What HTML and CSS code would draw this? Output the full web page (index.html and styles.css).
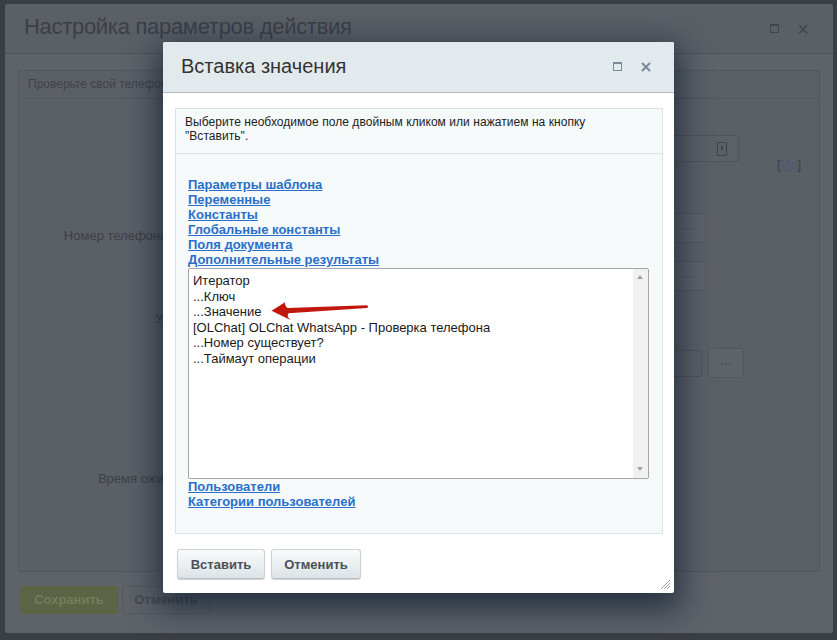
FILE: index.html
```html
<!DOCTYPE html>
<html lang="ru">
<head>
<meta charset="utf-8">
<title>Вставка значения</title>
<link rel="stylesheet" href="styles.css">
</head>
<body>
<div class="desk">
  <div class="bgwin">
    <div class="bgwin-head">
      <div class="bgwin-title">Настройка параметров действия</div>
      <div class="bgwin-icons">
        <span class="ico-max dim"></span>
        <span class="ico-close dim">×</span>
      </div>
    </div>
    <div class="bgwin-body">
      <div class="bgpanel">
        <div class="bgpanel-head">Проверьте свой телефон в OLChat WhatsApp</div>
        <div class="bgrow row-a">
          <div class="bglabel"></div>
          <div class="bginput w-a"><span class="doc-ico"></span></div>
          <div class="idlink">[<u>Ид</u>]</div>
        </div>
        <div class="bgrow row-b">
          <div class="bglabel lbl-pad lbl-phone">Номер телефона в международном формате:</div>
          <div class="bginput w-b"></div>
          <div class="bgbtn">...</div>
        </div>
        <div class="bgrow row-c">
          <div class="bglabel"></div>
          <div class="bginput w-b"></div>
          <div class="bgbtn">...</div>
        </div>
        <div class="bgrow row-u">
          <div class="bglabel">Учитывать ошибки проверки:</div>
        </div>
        <div class="bgrow row-d">
          <div class="bglabel"></div>
          <div class="bginput w-d"></div>
          <div class="bgbtn">...</div>
        </div>
        <div class="bgrow row-t">
          <div class="bglabel lbl-time">Время ожидания ответа (в секундах):</div>
        </div>
      </div>
      <div class="bgfoot">
        <div class="bgsave">Сохранить</div>
        <div class="bgcancel">Отменить</div>
      </div>
    </div>
  </div>

  <div class="modal">
    <div class="modal-head">
      <div class="modal-title">Вставка значения</div>
      <div class="modal-icons">
        <span class="ico-max"></span>
        <span class="ico-x">
          <svg width="10" height="10" viewBox="0 0 10 10"><path d="M1 1 L9 9 M9 1 L1 9" stroke="#7b8898" stroke-width="2" fill="none"/></svg>
        </span>
      </div>
    </div>
    <div class="modal-body">
      <div class="panel">
        <div class="info">Выберите необходимое поле двойным кликом или нажатием на кнопку "Вставить".</div>
        <div class="groups">
          <a class="grp">Параметры шаблона</a>
          <a class="grp">Переменные</a>
          <a class="grp">Константы</a>
          <a class="grp">Глобальные константы</a>
          <a class="grp">Поля документа</a>
          <a class="grp">Дополнительные результаты</a>
          <div class="listbox">
            <div class="items">
              <div>Итератор</div>
              <div>...Ключ</div>
              <div>...Значение</div>
              <div>[OLChat] OLChat WhatsApp - Проверка телефона</div>
              <div>...Номер существует?</div>
              <div>...Таймаут операции</div>
            </div>
            <div class="sbar">
              <span class="arr-up"></span>
              <span class="arr-down"></span>
            </div>
          </div>
          <a class="grp">Пользователи</a>
          <a class="grp">Категории пользователей</a>
        </div>
      </div>
    </div>
    <div class="modal-foot">
      <button class="btn b-insert">Вставить</button>
      <button class="btn b-cancel">Отменить</button>
    </div>
    <svg class="grip" width="12" height="12" viewBox="0 0 12 12">
      <path d="M11 2 L2 11 M11 5 L5 11 M11 8 L8 11" stroke="#9aa0a4" stroke-width="1" fill="none"/>
    </svg>
    <svg class="red-arrow" width="100" height="22" viewBox="0 0 100 22">
      <path d="M1.5 10.8 L15 2.2 Q14.5 5.5 17.5 8 L96.5 5.3 Q99.5 6.4 97 8 L18.5 13.2 Q16 16.5 21 20.2 Z" fill="#c0170e"/>
    </svg>
  </div>
</div>
</body>
</html>
```

FILE: styles.css
```css
* { box-sizing: border-box; }
html, body { margin: 0; padding: 0; }
body {
  width: 837px;
  height: 640px;
  overflow: hidden;
  background: #3a3e45;
  font-family: "Liberation Sans", Arial, sans-serif;
}
.desk { position: relative; width: 837px; height: 640px; }

/* background window (dimmed) */
.bgwin {
  position: absolute;
  left: 5px;
  top: 4px;
  width: 828px;
  height: 629px;
  background: #5e6269;
  border-radius: 3px;
  display: flex;
  flex-direction: column;
}
.bgwin-head {
  height: 50px;
  border-bottom: 1px solid #4e5258;
  display: flex;
  align-items: center;
  padding-left: 19px;
  background: #5b5f66;
  border-radius: 3px 3px 0 0;
}
.bgwin-title {
  font-size: 22px;
  color: #3b3f46;
  letter-spacing: -0.3px;
  padding-bottom: 4px;
}
.bgwin-icons {
  margin-left: auto;
  display: flex;
  align-items: center;
  gap: 18px;
  padding-right: 24px;
}
.dim.ico-max { border-color: #40444b; }
.ico-close.dim { color: #40444b; font-size: 20px; line-height: 16px; }
.bgwin-body { padding: 16px 13px 0; }
.bgpanel {
  height: 502px;
  border: 1px solid #53575e;
  background: #5b5f66;
  display: flex;
  flex-direction: column;
}
.bgpanel-head {
  height: 28px;
  flex: none;
  border-bottom: 1px solid #53575e;
  padding-left: 9px;
  font-size: 12px;
  line-height: 27px;
  color: #40444b;
}
.bgrow { display: flex; align-items: flex-start; flex: none; }
.bglabel {
  width: 322px;
  flex: none;
  text-align: right;
  padding-right: 10px;
  font-size: 13px;
  line-height: 16px;
  color: #3d4148;
  white-space: nowrap;
}
.lbl-pad { padding-top: 15px; }
.lbl-phone { padding-right: 0; }
.lbl-time { padding-right: 17px; }
.bginput {
  height: 27px;
  border: 1px solid #4f535a;
  border-radius: 3px;
  background: #5c6067;
  position: relative;
}
.row-a { margin-top: 36px; height: 27px; }
.row-b { margin-top: 51px; height: 30px; }
.row-c { margin-top: 18px; height: 30px; }
.row-u { margin-top: 20px; height: 16px; }
.row-d { margin-top: 21px; height: 30px; }
.row-t { margin-top: 93px; height: 16px; }
.w-a { width: 398px; }
.w-b { width: 322px; height: 30px; margin-right: 7px; }
.w-d { width: 361px; margin-top: 2px; margin-right: 6px; }
.doc-ico {
  position: absolute;
  right: 11px;
  top: 6px;
  width: 10px;
  height: 14px;
  border: 1px solid #3f434a;
  border-radius: 1px;
  background: linear-gradient(#3f434a, #3f434a) 3px 3px / 2px 4px no-repeat;
}
.idlink {
  margin-left: 38px;
  margin-top: 23px;
  font-size: 13px;
  line-height: 14px;
  color: #3d4148;
}
.idlink u { color: #4b5a70; }
.bgbtn {
  width: 36px;
  height: 30px;
  border: 1px solid #53575e;
  border-radius: 3px;
  background: #5f636a;
  color: #43474e;
  font-size: 12px;
  line-height: 24px;
  text-align: center;
}
.bgfoot {
  display: flex;
  gap: 4px;
  padding: 14px 0 0 2px;
}
.bgsave {
  width: 98px;
  height: 28px;
  border-radius: 3px;
  background: #5b6445;
  color: #737c5d;
  font-weight: bold;
  font-size: 13px;
  line-height: 28px;
  text-align: center;
}
.bgcancel {
  width: 88px;
  height: 28px;
  border-radius: 3px;
  background: #5e6269;
  border: 1px solid #565a61;
  color: #464a51;
  font-weight: bold;
  font-size: 13px;
  line-height: 26px;
  text-align: center;
}

/* modal */
.modal {
  position: absolute;
  left: 163px;
  top: 42px;
  width: 511px;
  height: 551px;
  background: #fff;
  border-radius: 2px;
  box-shadow: 0 10px 30px 6px rgba(14, 30, 46, 0.7);
  display: flex;
  flex-direction: column;
}
.modal-head {
  height: 51px;
  flex: none;
  background: #e3eaed;
  border-bottom: 1px solid #b5bcc0;
  display: flex;
  align-items: center;
  padding-left: 18px;
  border-radius: 2px 2px 0 0;
}
.modal-title {
  font-size: 20px;
  color: #333;
  padding-bottom: 1px;
}
.modal-icons {
  margin-left: auto;
  display: flex;
  align-items: center;
  gap: 19px;
  padding-right: 23px;
  padding-bottom: 1px;
}
.ico-max {
  display: block;
  width: 9px;
  height: 9px;
  border: 1px solid #7b8898;
  border-top-width: 2px;
}
.ico-x { display: block; width: 10px; height: 10px; }
.ico-x svg { display: block; }
.modal-body { padding: 15px 11px 0 12px; }
.panel {
  border: 1px solid #d9e4e9;
  background: #f5f9fa;
}
.info {
  padding: 6px 60px 10px 9px;
  font-size: 12px;
  line-height: 14px;
  letter-spacing: 0.05px;
  color: #222;
  border-bottom: 1px solid #d9e4e9;
}
.groups {
  padding: 23px 12px 24px;
  display: flex;
  flex-direction: column;
  align-items: flex-start;
}
.grp {
  font-size: 13px;
  font-weight: bold;
  line-height: 15px;
  color: #2a6fc9;
  text-decoration: underline;
}
.listbox {
  margin: 1px 0 0;
  width: 461px;
  height: 211px;
  border: 1px solid #a6a6a6;
  border-radius: 2px;
  background: #fff;
  display: flex;
}
.items {
  flex: 1;
  padding: 4px 0 0 4px;
  font-size: 13px;
  line-height: 15.5px;
  color: #1a1a1a;
}
.sbar {
  width: 15px;
  flex: none;
  background: #f1f1f1;
  position: relative;
}
.arr-up, .arr-down {
  position: absolute;
  left: 4px;
  width: 0;
  height: 0;
  border-left: 3.5px solid transparent;
  border-right: 3.5px solid transparent;
}
.arr-up { top: 6px; border-bottom: 4px solid #a3a3a3; }
.arr-down { bottom: 7px; border-top: 4px solid #a3a3a3; }
.modal-foot {
  display: flex;
  gap: 6px;
  padding: 15px 14px 0;
}
.btn {
  height: 30px;
  padding: 0;
  border: 1px solid #cbd2d5;
  border-bottom-color: #b7bfc3;
  border-radius: 3px;
  background: linear-gradient(#f9fbfb, #dce3e6);
  box-shadow: 0 1px 1px rgba(0, 0, 0, 0.18);
  font-family: "Liberation Sans", Arial, sans-serif;
  font-size: 13px;
  font-weight: bold;
  color: #4a5158;
}
.b-insert { width: 88px; }
.b-cancel { width: 90px; }
.grip {
  position: absolute;
  right: 3px;
  bottom: 3px;
}
.red-arrow {
  position: absolute;
  left: 107px;
  top: 258px;
}
```
